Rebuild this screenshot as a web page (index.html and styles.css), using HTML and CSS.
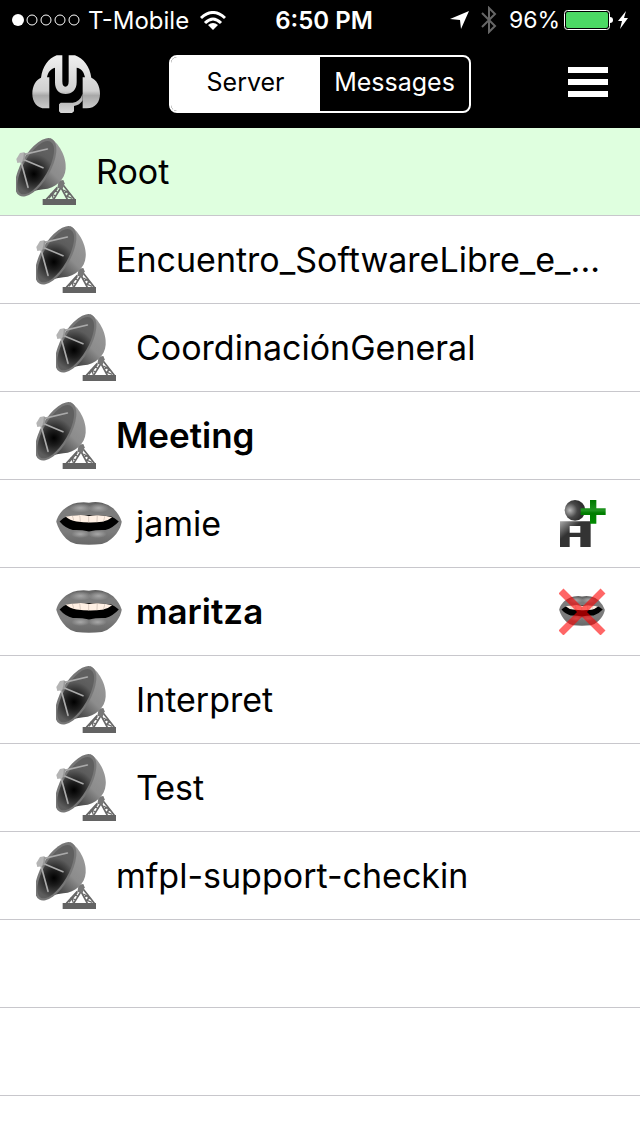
FILE: index.html
```
<!DOCTYPE html>
<html lang="en">
<head>
<meta charset="UTF-8">
<meta name="viewport" content="width=device-width, initial-scale=1">
<title>Mumble</title>
<link rel="stylesheet" href="styles.css">
</head>
<body>

<!-- shared icons -->
<svg class="defs" width="0" height="0" aria-hidden="true">
  <defs>
    <linearGradient id="dishBack" x1="0.1" y1="1" x2="0.8" y2="0.1">
      <stop offset="0" stop-color="#3a3a3a"/>
      <stop offset="0.3" stop-color="#505050"/>
      <stop offset="0.6" stop-color="#8c8c8c"/>
      <stop offset="1" stop-color="#999"/>
    </linearGradient>
    <radialGradient id="dishInner" gradientUnits="userSpaceOnUse" cx="112" cy="138" r="75">
      <stop offset="0" stop-color="#000"/>
      <stop offset="0.3" stop-color="#1c1c1c"/>
      <stop offset="0.8" stop-color="#5c5c5c"/>
      <stop offset="1" stop-color="#606060"/>
    </radialGradient>
    <linearGradient id="lip" x1="0" y1="0" x2="0" y2="1">
      <stop offset="0" stop-color="#606060"/>
      <stop offset="0.2" stop-color="#7c7c7c"/>
      <stop offset="0.7" stop-color="#7c7c7c"/>
      <stop offset="1" stop-color="#686868"/>
    </linearGradient>
    <radialGradient id="shine">
      <stop offset="0" stop-color="#a8a8a8"/>
      <stop offset="1" stop-color="#a8a8a8" stop-opacity="0"/>
    </radialGradient>
    <radialGradient id="ball" cx="0.25" cy="0.5" r="0.6">
      <stop offset="0" stop-color="#bbb"/>
      <stop offset="0.6" stop-color="#484848"/>
      <stop offset="1" stop-color="#303030"/>
    </radialGradient>
    <linearGradient id="torso" x1="0" y1="0" x2="0.6" y2="0.6">
      <stop offset="0" stop-color="#aaa"/>
      <stop offset="0.6" stop-color="#333"/>
    </linearGradient>
    <linearGradient id="plus" x1="0" y1="0" x2="0" y2="1">
      <stop offset="0" stop-color="#007800"/>
      <stop offset="0.45" stop-color="#209520"/>
      <stop offset="0.55" stop-color="#007d00"/>
      <stop offset="1" stop-color="#008a00"/>
    </linearGradient>
    <linearGradient id="silver" gradientUnits="userSpaceOnUse" x1="0" y1="42" x2="0" y2="216">
      <stop offset="0" stop-color="#f0f0f0"/>
      <stop offset="0.62" stop-color="#d0d0d0"/>
      <stop offset="0.7" stop-color="#a8a8a8"/>
      <stop offset="1" stop-color="#d8d8d8"/>
    </linearGradient>
  </defs>

  <symbol id="dish" viewBox="48 30 180 201">
    <g fill="none" stroke="#686868" stroke-width="5">
      <path d="M172 178L139 214M182 180L161 214M184 180L202 214M190 172L223 214"/>
      <path stroke-width="4" d="M164 185l10 9M152 197l15 7M172 182l-16 19l4 11M159 195l-12 16M205 190l-12 5M210 198l-13 8M190 186l15 8l-2 12l14 5M206 194l-5 14"/>
    </g>
    <path fill="#777" d="M176 158L190 156L194 166L188 182L172 180z"/>
    <path fill="#636363" d="M128 213h100v18H128z"/>
    <path fill="url(#dishBack)" d="M151 31C174 42 201 87 197 122C195 155 167 181 130 184C105 187 79 196 65 204z"/>
    <ellipse cx="107" cy="118" rx="44" ry="98" transform="rotate(30 107 118)" fill="#777"/>
    <ellipse cx="107" cy="119" rx="37" ry="90" transform="rotate(30 107 119)" fill="url(#dishInner)"/>
    <g fill="none" stroke="#aaa" stroke-width="5" stroke-linecap="round">
      <path d="M70 80L142 63M68 94L129 119M62 97L84 178"/>
    </g>
    <path fill="#b4b4b4" d="M60 75l12-2l2 15l-9 15l-13 2l-3-12z"/>
    <path fill="#999" d="M72 73l6 4l-4 19l-9 9l5-16z"/>
  </symbol>

  <symbol id="mouth" viewBox="48 35 198 130">
    <path fill="url(#lip)" d="M48 95C52 76 66 58 84 48Q100 38 112 37Q132 34 147 37Q166 33 186 37Q206 42 220 54Q240 74 246 95C242 118 228 136 214 147Q200 160 186 162Q147 166 108 162Q90 158 78 146Q56 124 48 95z"/>
    <ellipse cx="121" cy="53" rx="34" ry="14" fill="url(#shine)"/>
    <ellipse cx="176" cy="53" rx="32" ry="14" fill="url(#shine)"/>
    <ellipse cx="121" cy="132" rx="28" ry="12" fill="url(#shine)"/>
    <ellipse cx="173" cy="132" rx="28" ry="12" fill="url(#shine)"/>
    <path d="M58 94Q70 82 80 79Q147 70 214 79Q225 83 237 94Q220 113 197 120Q174 118 147 124Q120 118 98 120Q75 114 58 94z"/>
    <path fill="#fff0e4" d="M76 79Q105 75 121 74Q134 74 147 77Q160 74 176 75Q200 76 217 81Q204 92 187 95Q147 99 109 94Q89 91 76 79z"/>
    <path fill="none" stroke="#c9b9ae" stroke-width="2" d="M97 77l4 14M119 75l2 20M146 77v20M172 75l-1 21M195 77l-4 17"/>
  </symbol>
</svg>

<header>
  <div class="status">
    <div class="carrier">
      <svg width="68" height="13" viewBox="0 0 68 13">
        <circle cx="6" cy="6" r="6" fill="#fff"/>
        <g fill="none" stroke="#fff"><circle cx="20" cy="6" r="5"/><circle cx="34" cy="6" r="5"/><circle cx="48" cy="6" r="5"/><circle cx="62" cy="6" r="5"/></g>
      </svg>
      <span>T-Mobile</span>
      <svg class="wifi" width="26" height="19" viewBox="0 0 26 19" fill="none" stroke="#fff" stroke-width="3">
        <path d="M1 7Q13-4 25 7M5 12Q13 4 21 12"/>
        <path fill="#fff" stroke="none" d="M8 14Q13 10 18 14L13 19z"/>
      </svg>
    </div>
    <span class="time">6:50 PM</span>
    <div class="power">
      <svg width="19" height="18" viewBox="0 0 19 18" fill="#fff"><path d="M19 0L11 18L10 9L0 8z"/></svg>
      <svg class="bluetooth" width="16" height="28" viewBox="0 0 16 28" fill="none" stroke="#666" stroke-width="2"><path d="M1 7L14 20L8 26V2L14 8L1 21"/></svg>
      <span class="percent">96%</span>
      <svg class="battery" width="50" height="20" viewBox="0 0 50 20">
        <rect x="0.5" y="0.5" width="45" height="19" rx="3" fill="none" stroke="#fff"/>
        <rect x="2" y="2" width="42" height="16" rx="2" fill="#4cd964"/>
        <path fill="#fff" d="M46 7q3 0 3 3q0 3-3 3z"/>
      </svg>
      <svg width="10" height="18" viewBox="0 0 10 18" fill="#fff"><path d="M8 0L0 10H4L2 18L10 7H6z"/></svg>
    </div>
  </div>

  <nav>
    <svg class="logo" viewBox="38 42 204 174" role="img" aria-label="Mumble">
      <g fill="url(#silver)">
        <path d="M112 43H129V121Q129 137 138 137Q148 137 148 121V43H167C193 53 211 76 216 110C231 116 242 134 242 158C242 183 229 201 202 202H190V109H197C193 90 185 82 172 80V124C172 147 158 159 139 159C119 159 107 147 107 124V80C94 84 86 93 83 109H90V202H78C53 202 39 183 39 158C39 134 50 116 65 110C70 76 86 53 112 43z"/>
        <path d="M190 168V178Q181 193 164 195V211L158 216H124L119 211V190L124 185H160Q180 184 190 158z"/>
      </g>
    </svg>
    <div class="segments">
      <button class="active">Server</button>
      <button>Messages</button>
    </div>
    <button class="menu" aria-label="Menu">
      <svg width="40" height="34" viewBox="0 0 40 34" fill="#fff"><path d="M0 0h40v6H0zM0 12h40v6H0zM0 24h40v6H0z"/></svg>
    </button>
  </nav>
</header>

<ul class="channels">
  <li class="current">
    <svg class="dish"><use href="#dish"/></svg>
    <span class="name">Root</span>
  </li>
  <li class="level1">
    <svg class="dish"><use href="#dish"/></svg>
    <span class="name">Encuentro_SoftwareLibre_e_...</span>
  </li>
  <li class="level2">
    <svg class="dish"><use href="#dish"/></svg>
    <span class="name">CoordinaciónGeneral</span>
  </li>
  <li class="level1 joined">
    <svg class="dish"><use href="#dish"/></svg>
    <span class="name">Meeting</span>
  </li>
  <li class="level2">
    <svg class="mouth"><use href="#mouth"/></svg>
    <span class="name">jamie</span>
    <button class="state" aria-label="Friend">
      <svg viewBox="58 60 141 141">
        <circle cx="106" cy="91" r="31" fill="url(#ball)"/>
        <path fill="url(#torso)" fill-rule="evenodd" d="M61 124H153V201H122V171H90V201H61zM90 138V158H122V138z"/>
        <path fill="url(#plus)" d="M151 60H170V85H198V105H170V131H151V105H123V85H151z"/>
      </svg>
    </button>
  </li>
  <li class="level2 joined">
    <svg class="mouth"><use href="#mouth"/></svg>
    <span class="name">maritza</span>
    <button class="state" aria-label="Muted">
      <svg viewBox="0 0 47 47">
        <use href="#mouth" x="0" y="8" width="46" height="30"/>
        <path stroke="#f00" stroke-opacity="0.6" stroke-width="7" fill="none" d="M2 3L44 45M44 3L2 45"/>
      </svg>
    </button>
  </li>
  <li class="level2">
    <svg class="dish"><use href="#dish"/></svg>
    <span class="name">Interpret</span>
  </li>
  <li class="level2">
    <svg class="dish"><use href="#dish"/></svg>
    <span class="name">Test</span>
  </li>
  <li class="level1">
    <svg class="dish"><use href="#dish"/></svg>
    <span class="name">mfpl-support-checkin</span>
  </li>
  <li></li>
  <li></li>
</ul>

</body>
</html>
```
FILE: styles.css
```
* {
  box-sizing: border-box;
}

body {
  margin: 0;
  background: #fff;
  color: #000;
  font-family: Inter, "Liberation Sans", sans-serif;
}

button {
  padding: 0;
  border: none;
  background: none;
  color: inherit;
  font: inherit;
  cursor: pointer;
}

svg {
  display: block;
  flex: none;
}

.defs {
  position: absolute;
}

header {
  background: #000;
  color: #fff;
}

/* status bar */
.status {
  display: grid;
  grid-template-columns: 1fr auto 1fr;
  align-items: center;
  height: 40px;
  padding: 0 12px;
  font-size: 24px;
}

.carrier,
.power {
  display: flex;
  align-items: center;
}

.carrier {
  gap: 8px;
}

.wifi {
  margin-left: 3px;
}

.power {
  justify-content: flex-end;
}

.bluetooth {
  margin: 0 12px;
}

.percent {
  font-size: 23px;
}

.battery {
  margin: 0 4px;
}

.time {
  margin-left: 8px;
  font-weight: 600;
}

/* top bar */
nav {
  display: grid;
  grid-template-columns: 1fr auto 1fr;
  align-items: center;
  height: 88px;
  padding: 0 32px;
}

.logo {
  width: 68px;
  height: 58px;
}

.segments {
  display: flex;
  height: 58px;
  border: 2px solid #fff;
  border-radius: 8px;
  overflow: hidden;
  font-size: 25px;
}

.segments button {
  width: 149px;
  padding-bottom: 4px;
}

.segments .active {
  background: #fff;
  color: #000;
}

.menu {
  justify-self: end;
}

/* channel tree */
.channels {
  margin: 0;
  padding: 0;
  list-style: none;
}

.channels li {
  display: flex;
  align-items: center;
  height: 88px;
  padding: 0 34px 0 16px;
  border-bottom: 1px solid #c8c7cc;
  font-size: 34px;
}

.channels .level1 {
  padding-left: 36px;
}

.channels .level2 {
  padding-left: 56px;
}

.channels .current {
  background: #dfffdf;
}

.channels .joined {
  font-size: 35px;
  font-weight: 600;
}

.dish {
  width: 60px;
  height: 67px;
  margin-right: 20px;
}

.mouth {
  width: 66px;
  height: 43px;
  margin-right: 14px;
}

.name {
  flex: 1;
  min-width: 0;
  white-space: nowrap;
}

.joined .name {
  padding-bottom: 2px;
}

.state svg {
  width: 47px;
  height: 47px;
}
```
